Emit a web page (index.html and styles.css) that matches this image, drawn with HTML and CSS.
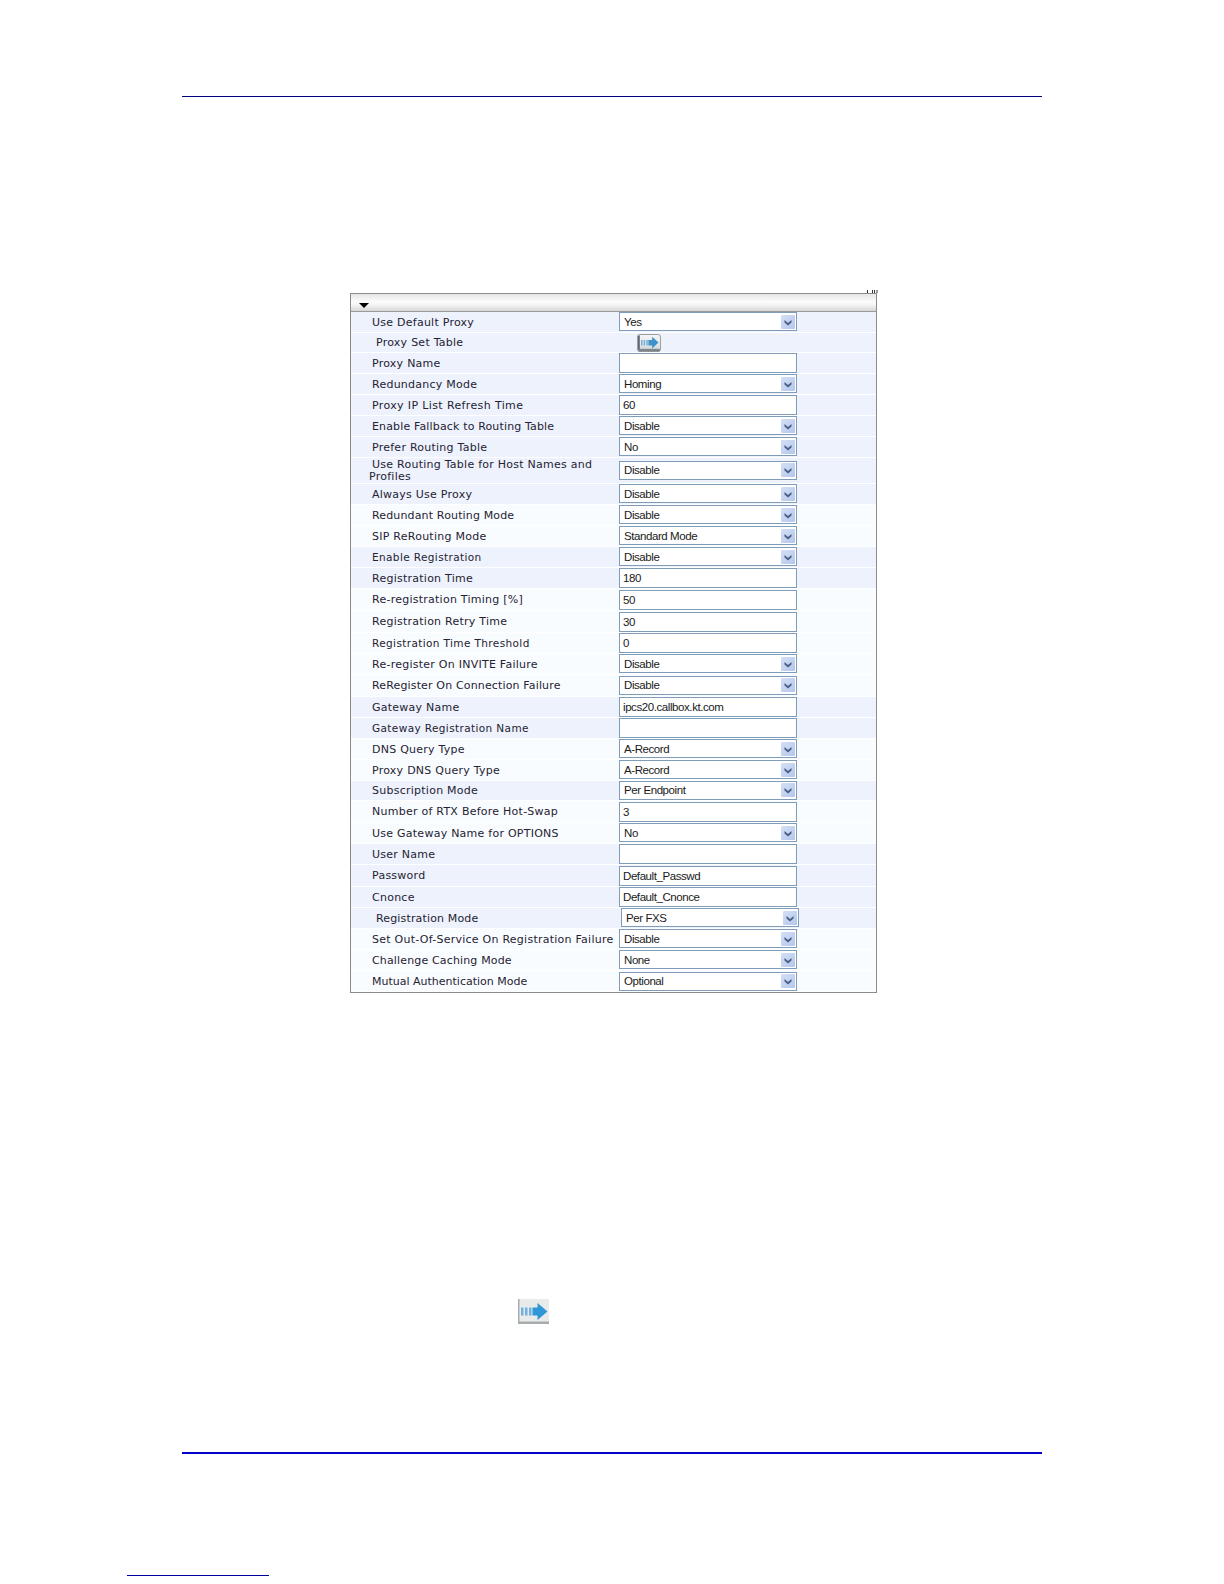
FILE: index.html
```html
<!DOCTYPE html>
<html lang="en">
<head>
<meta charset="utf-8">
<title>Proxy and Registration Settings</title>
<link rel="stylesheet" href="styles.css">
</head>
<body>
<svg class="defs" width="0" height="0" aria-hidden="true">
  <defs>
    <linearGradient id="btn" x1="0" y1="0" x2="0" y2="1"><stop offset="0" stop-color="#f4f5f5"/><stop offset=".7" stop-color="#dfe3e5"/><stop offset="1" stop-color="#aeb3b6"/></linearGradient>
    <linearGradient id="chevbg" x1="0" y1="0" x2="1" y2="1"><stop offset="0" stop-color="#d5e0f5"/><stop offset="1" stop-color="#b3c6ec"/></linearGradient>
  </defs>
  <symbol id="go" viewBox="0 0 24 18">
    <rect x=".5" y=".5" width="23" height="17" rx="2.5" fill="url(#btn)" stroke="#9a9fa3"/>
    <rect x="1" y="15" width="22" height="2.500" rx="1.200" fill="#7f8589"/>
    <rect x="1" y="1.500" width="1.800" height="14" fill="#5f6a70"/>
    <path d="M4 6h1.600v5.500H4zM6.600 6h1.600v5.500H6.600zM9.200 6h1.600v5.500H9.200z" fill="#79b2d8"/>
    <path d="M11.400 6h3.800V2.800L21.500 8.500l-6.300 6v-3h-3.800z" fill="#3f93c9"/>
  </symbol>
  <symbol id="go-lg" viewBox="0 0 31 25">
    <rect width="31" height="25" fill="#e9eaea"/>
    <rect y="22.500" width="31" height="2.500" fill="#a8abad"/>
    <rect width="1.500" height="23" fill="#a9adb0"/>
    <path d="M3 8.500h2.500v8H3zM7 8.500h2.500v8H7zM11 8.500h2.500v8H11z" fill="#6fb2e0"/>
    <path d="M14.500 8.500h5V4l10 8.500-10 8.500v-4.500h-5z" fill="#2f97d8"/>
  </symbol>
  <symbol id="chev" viewBox="0 0 14 14">
    <rect width="14" height="14" rx="1" fill="url(#chevbg)"/>
    <path d="M3.500 5l3.500 3 3.500-3v2.500L7 10.500 3.500 7.500z" fill="#4a5f86"/>
  </symbol>
</svg>
<div class="page">
  <div class="rule rule-top"></div>
  <div class="panel-wrap">
    <svg class="specks" width="12" height="4" viewBox="0 0 12 4" aria-hidden="true"><path d="M1 0h1v3H1zM6 0h1v3H6zM8 0h1v3H8zM10.500 0h1v3h-1z" fill="#333"/></svg>
    <div class="panel">
      <div class="panel-head"><span class="tri"></span></div>

      <div class="row b h21"><div class="lbl">Use Default Proxy</div><div class="ctl sel"><span>Yes</span><svg class="arrow"><use href="#chev"/></svg></div></div>
      <div class="row b h20"><div class="lbl ind">Proxy Set Table</div><svg class="go"><use href="#go"/></svg></div>
      <div class="row b h21"><div class="lbl">Proxy Name</div><div class="ctl inp"></div></div>
      <div class="row b h21"><div class="lbl">Redundancy Mode</div><div class="ctl sel"><span>Homing</span><svg class="arrow"><use href="#chev"/></svg></div></div>
      <div class="row b h21"><div class="lbl loose">Proxy IP List Refresh Time</div><div class="ctl inp"><span>60</span></div></div>
      <div class="row b h21"><div class="lbl tight">Enable Fallback to Routing Table</div><div class="ctl sel"><span>Disable</span><svg class="arrow"><use href="#chev"/></svg></div></div>
      <div class="row b h21"><div class="lbl">Prefer Routing Table</div><div class="ctl sel"><span>No</span><svg class="arrow"><use href="#chev"/></svg></div></div>
      <div class="row b h26"><div class="lbl wrap">Use Routing Table for Host Names and Profiles</div><div class="ctl sel"><span>Disable</span><svg class="arrow"><use href="#chev"/></svg></div></div>
      <div class="row b h21"><div class="lbl">Always Use Proxy</div><div class="ctl sel"><span>Disable</span><svg class="arrow"><use href="#chev"/></svg></div></div>
      <div class="row h21"><div class="lbl tight">Redundant Routing Mode</div><div class="ctl sel"><span>Disable</span><svg class="arrow"><use href="#chev"/></svg></div></div>
      <div class="row h21"><div class="lbl">SIP ReRouting Mode</div><div class="ctl sel"><span>Standard Mode</span><svg class="arrow"><use href="#chev"/></svg></div></div>
      <div class="row b h21"><div class="lbl sm">Enable Registration</div><div class="ctl sel"><span>Disable</span><svg class="arrow"><use href="#chev"/></svg></div></div>
      <div class="row b h21"><div class="lbl">Registration Time</div><div class="ctl inp"><span>180</span></div></div>
      <div class="row h22"><div class="lbl">Re-registration Timing [%]</div><div class="ctl inp"><span>50</span></div></div>
      <div class="row h22"><div class="lbl">Registration Retry Time</div><div class="ctl inp"><span>30</span></div></div>
      <div class="row h21"><div class="lbl sm">Registration Time Threshold</div><div class="ctl inp"><span>0</span></div></div>
      <div class="row h21"><div class="lbl">Re-register On INVITE Failure</div><div class="ctl sel"><span>Disable</span><svg class="arrow"><use href="#chev"/></svg></div></div>
      <div class="row h22"><div class="lbl tight">ReRegister On Connection Failure</div><div class="ctl sel"><span>Disable</span><svg class="arrow"><use href="#chev"/></svg></div></div>
      <div class="row b h21"><div class="lbl">Gateway Name</div><div class="ctl inp"><span>ipcs20.callbox.kt.com</span></div></div>
      <div class="row b h21"><div class="lbl sm">Gateway Registration Name</div><div class="ctl inp"></div></div>
      <div class="row h21"><div class="lbl">DNS Query Type</div><div class="ctl sel"><span>A-Record</span><svg class="arrow"><use href="#chev"/></svg></div></div>
      <div class="row h21"><div class="lbl">Proxy DNS Query Type</div><div class="ctl sel"><span>A-Record</span><svg class="arrow"><use href="#chev"/></svg></div></div>
      <div class="row b h20"><div class="lbl">Subscription Mode</div><div class="ctl sel"><span>Per Endpoint</span><svg class="arrow"><use href="#chev"/></svg></div></div>
      <div class="row h22"><div class="lbl">Number of RTX Before Hot-Swap</div><div class="ctl inp"><span>3</span></div></div>
      <div class="row h21"><div class="lbl">Use Gateway Name for OPTIONS</div><div class="ctl sel"><span>No</span><svg class="arrow"><use href="#chev"/></svg></div></div>
      <div class="row b h21"><div class="lbl">User Name</div><div class="ctl inp"></div></div>
      <div class="row b h22"><div class="lbl">Password</div><div class="ctl inp"><span>Default_Passwd</span></div></div>
      <div class="row b h21"><div class="lbl">Cnonce</div><div class="ctl inp"><span>Default_Cnonce</span></div></div>
      <div class="row b h21"><div class="lbl ind tight">Registration Mode</div><div class="ctl sel shifted"><span>Per FXS</span><svg class="arrow"><use href="#chev"/></svg></div></div>
      <div class="row h21"><div class="lbl">Set Out-Of-Service On Registration Failure</div><div class="ctl sel"><span>Disable</span><svg class="arrow"><use href="#chev"/></svg></div></div>
      <div class="row h21"><div class="lbl tight">Challenge Caching Mode</div><div class="ctl sel"><span>None</span><svg class="arrow"><use href="#chev"/></svg></div></div>
      <div class="row h21"><div class="lbl flat">Mutual Authentication Mode</div><div class="ctl sel"><span>Optional</span><svg class="arrow"><use href="#chev"/></svg></div></div>
    </div>
  </div>
  <svg class="go-large"><use href="#go-lg"/></svg>
  <div class="rule rule-bottom"></div>
  <div class="footnote-rule"></div>
</div>
</body>
</html>
```

FILE: styles.css
```css
* { box-sizing: border-box; }
html, body { margin: 0; padding: 0; background: #fff; }
.defs { position: absolute; }
.page {
  width: 1224px;
  height: 1584px;
  padding-top: 96px;
  overflow: hidden;
  display: flex;
  flex-direction: column;
}
.rule { margin-left: 182px; width: 860px; flex: none; }
.rule-top { height: 1px; background: #000080; }
.rule-bottom { height: 2px; background: #0000c8; margin-top: 128px; }
.footnote-rule {
  width: 142px;
  height: 1px;
  margin: 121px 0 0 127px;
  background: #0000a0;
  flex: none;
}
.panel-wrap {
  position: relative;
  width: 527px;
  margin: 196px 0 0 350px;
  flex: none;
}
.specks { position: absolute; top: -3px; right: -1px; }
.panel {
  border: 1px solid #8b8b8b;
  background: #f9fcff;
  font: 11px/12px "DejaVu Sans", Verdana, sans-serif;
  letter-spacing: .25px;
  color: #262233;
}
.panel-head {
  height: 18px;
  padding: 9px 0 0 8px;
  border-bottom: 1px solid #9a9a9a;
  background: linear-gradient(#e6e6e6, #fbfbfb 45%, #f4f4f4 65%, #d6d6d6);
}
.tri {
  display: block;
  width: 0;
  height: 0;
  border-style: solid;
  border-width: 5px 5px 0;
  border-color: #000 transparent transparent;
}
.row {
  display: flex;
  align-items: center;
  border-bottom: 1px solid #fff;
}
.row.b { background: #edf2fc; }
.h20 { height: 20px; }
.h21 { height: 21px; }
.h22 { height: 22px; }
.h26 { height: 26px; }
.lbl {
  width: 268px;
  flex: none;
  padding: 1px 0 0 21px;
  white-space: nowrap;
}
.lbl.ind { padding-left: 25px; }
.lbl.sm { padding-top: 0; margin-bottom: 1px; font-size: 10.5px; letter-spacing: .38px; }
.lbl.loose { letter-spacing: .37px; }
.lbl.tight { letter-spacing: .15px; }
.lbl.flat { letter-spacing: 0; }
.lbl.wrap {
  padding: 0 20px 0 18px;
  text-indent: 3px;
  white-space: normal;
}
.ctl {
  width: 178px;
  height: 20px;
  flex: none;
  display: flex;
  align-items: center;
  justify-content: space-between;
  background: #fff;
  border: 1px solid #7f9db9;
  font: 11.5px/14px "Liberation Sans", Arial, sans-serif;
  letter-spacing: -.42px;
  color: #1a1a1a;
}
.inp { padding-left: 3px; }
.sel { height: 19px; margin-bottom: 1px; padding: 0 1px 0 4px; }
.sel.shifted { margin-left: 2px; }
.row:last-child .sel { margin-bottom: 0; }
.arrow { width: 14px; height: 14px; flex: none; }
.go { width: 24px; height: 18px; margin-left: 18px; flex: none; }
.go-large {
  width: 31px;
  height: 25px;
  margin: 306px 0 0 518px;
  flex: none;
}
```
